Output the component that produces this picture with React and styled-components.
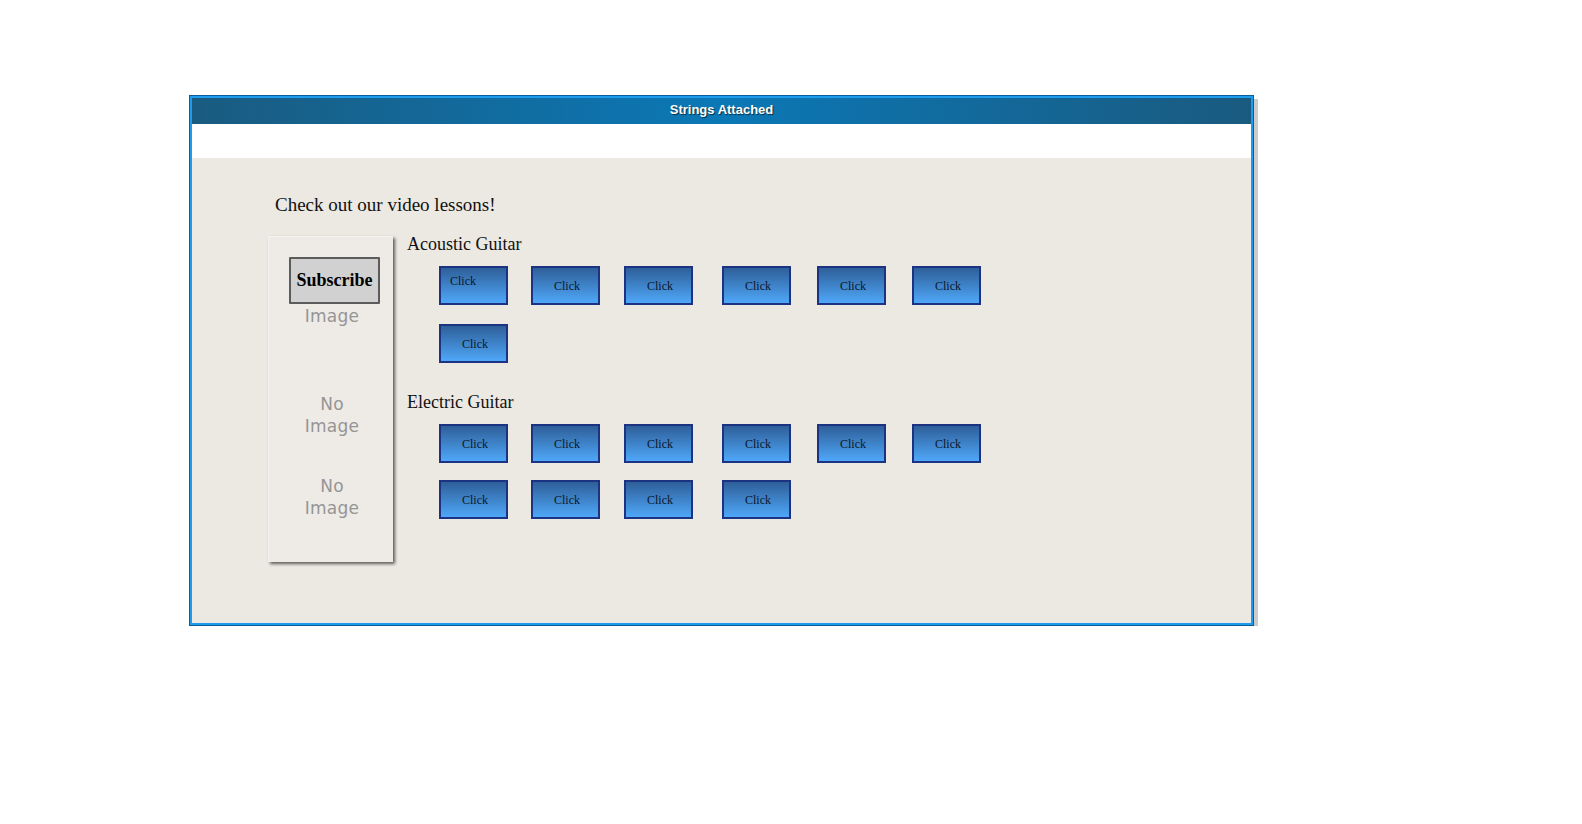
import React from "react";
import styled, { createGlobalStyle } from "styled-components";

const acoustic = [
  [{ corner: true }, {}, {}, {}, {}, {}],
  [{}],
];

const electric = [
  [{}, {}, {}, {}, {}, {}],
  [{}, {}, {}, {}],
];

const App = () => {
  return (
    <>
      <GlobalStyle />
      <Frame>
        <Inner>
          <Header>Strings Attached</Header>
          <WhiteBand />
          <Body>
            <Intro>Check out our video lessons!</Intro>
            <Main>
              <Sidebar>
                <Subscribe>Subscribe</Subscribe>
                <NoImage $top={1}>Image</NoImage>
                <NoImage $top={66}>
                  No
                  <br />
                  Image
                </NoImage>
                <NoImage $top={38}>
                  No
                  <br />
                  Image
                </NoImage>
              </Sidebar>
              <Lessons>
                <Section title="Acoustic Guitar" rows={acoustic} gap={19} />
                <Section
                  title="Electric Guitar"
                  rows={electric}
                  gap={17}
                  top={29}
                />
              </Lessons>
            </Main>
          </Body>
        </Inner>
      </Frame>
    </>
  );
};

const Section = ({ title, rows, gap, top = 0 }) => {
  return (
    <>
      <Heading $top={top}>{title}</Heading>
      <ButtonGrid $gap={gap}>
        {rows.map((row, r) =>
          row.map((b, i) => (
            <Click key={r + "-" + i} $corner={b.corner}>
              Click
            </Click>
          ))
        )}
      </ButtonGrid>
    </>
  );
};

const GlobalStyle = createGlobalStyle`
  body {
    margin: 0;
    background: #fff;
    font-family: "Liberation Serif", "Times New Roman", serif;
  }
`;

const Frame = styled.div`
  box-sizing: border-box;
  width: 1065px;
  height: 531px;
  margin: 95px 0 0 189px;
  border: 1px solid #0b5f98;
  box-shadow: 4px 4px 0 #cbcbcb;
`;

const Inner = styled.div`
  box-sizing: border-box;
  height: 100%;
  border: 2px solid #1d9cee;
  display: flex;
  flex-direction: column;
`;

const Header = styled.div`
  box-sizing: border-box;
  height: 26px;
  padding-bottom: 3px;
  display: flex;
  align-items: center;
  justify-content: center;
  background: linear-gradient(to right, #1a5b80, #0b78b6 50%, #1a5a7f);
  color: #fff;
  font-family: "Liberation Sans", Arial, sans-serif;
  font-weight: 700;
  font-size: 13px;
  text-shadow: 1px 1px 1px rgba(0, 0, 0, 0.6);
`;

const WhiteBand = styled.div`
  height: 34px;
  background: #fff;
`;

const Body = styled.div`
  flex: 1;
  background: #ece9e3;
  padding: 36px 0 0 76px;
`;

const Intro = styled.div`
  margin-left: 7px;
  font-size: 19px;
  line-height: 22px;
  color: #111;
`;

const Main = styled.div`
  display: flex;
  align-items: flex-start;
  margin-top: 20px;
`;

const Sidebar = styled.div`
  box-sizing: border-box;
  width: 125px;
  height: 326px;
  padding-top: 20px;
  background: #eeebe6;
  border: 1px solid #f5f3ef;
  border-right: none;
  border-bottom: none;
  box-shadow: 2px 2px 3px #5f5c58;
  display: flex;
  flex-direction: column;
`;

const Subscribe = styled.div`
  box-sizing: border-box;
  width: 91px;
  height: 47px;
  margin-left: 20px;
  display: flex;
  align-items: center;
  justify-content: center;
  background: #d1d1d1;
  border: 2px solid #5c5c5c;
  border-radius: 1px;
  font-weight: 700;
  font-size: 18px;
  color: #000;
`;

const NoImage = styled.div`
  width: 108px;
  margin: ${(p) => p.$top}px 0 0 9px;
  text-align: center;
  font-family: "DejaVu Sans", sans-serif;
  font-size: 17px;
  line-height: 22px;
  letter-spacing: 0.3px;
  color: #959595;
`;

const Lessons = styled.div`
  margin: -2px 0 0 14px;
  display: flex;
  flex-direction: column;
`;

const Heading = styled.div`
  margin-top: ${(p) => p.$top}px;
  font-size: 18px;
  line-height: 21px;
  color: #111;
`;

const ButtonGrid = styled.div`
  display: grid;
  grid-template-columns: 92px 93px 98px 95px 95px 69px;
  row-gap: ${(p) => p.$gap}px;
  margin: 11px 0 0 32px;
`;

const Click = styled.div`
  box-sizing: border-box;
  width: 69px;
  height: 39px;
  display: flex;
  align-items: ${(p) => (p.$corner ? "flex-start" : "center")};
  justify-content: ${(p) => (p.$corner ? "flex-start" : "center")};
  padding: ${(p) => (p.$corner ? "6px 0 0 9px" : "0 0 0 3px")};
  background: linear-gradient(to bottom, #2e5f99, #4fa7f8);
  border: 2px solid #1c3383;
  font-size: 12px;
  line-height: 14px;
  color: #0b1628;
  cursor: pointer;
`;

export default App;
